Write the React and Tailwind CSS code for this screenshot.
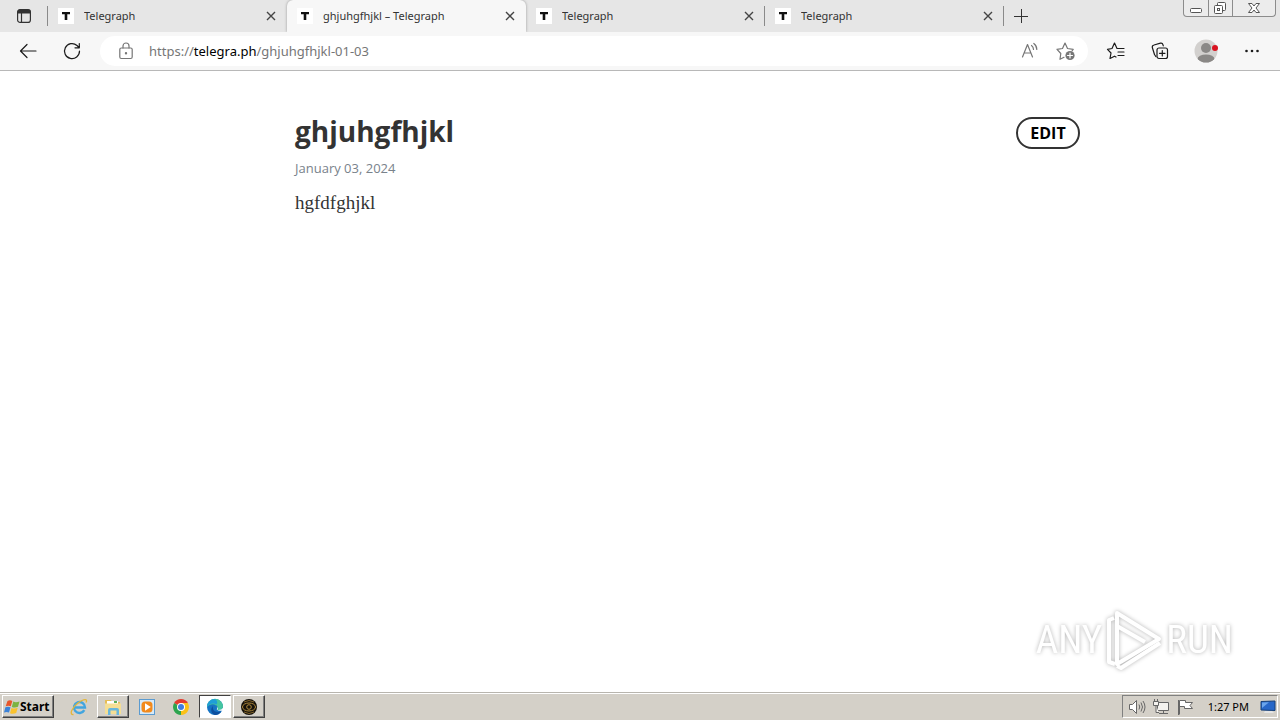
import { useState } from 'react';

const TABS = [
    { id: 1, title: 'Telegraph' },
    { id: 2, title: 'ghjuhgfhjkl – Telegraph' },
    { id: 3, title: 'Telegraph' },
    { id: 4, title: 'Telegraph' },
];

// Generic stroked icon on a 20px grid
function Icon({ children, className = 'size-5' }) {
    return (
        <svg
            viewBox="0 0 20 20"
            className={`${className} shrink-0`}
            fill="none"
            stroke="currentColor"
            strokeWidth="1.2"
            strokeLinecap="round"
            strokeLinejoin="round"
            aria-hidden="true"
        >
            {children}
        </svg>
    );
}

function WindowControls() {
    return (
        <div className="flex h-[17px] w-[93px] rounded-b-[4px] border border-t-0 border-[#8c8c8c] bg-[#ececec] text-[#555]">
            <button aria-label="Minimize" className="flex flex-1 items-center justify-center border-r border-[#8c8c8c]">
                <svg viewBox="0 0 14 14" className="size-[14px]" fill="#fff" stroke="currentColor">
                    <rect x="1.5" y="7.5" width="11" height="4" rx="1" />
                </svg>
            </button>
            <button aria-label="Restore" className="flex flex-1 items-center justify-center border-r border-[#8c8c8c]">
                <svg viewBox="0 0 14 14" className="size-[14px]" fill="#fff" stroke="currentColor">
                    <rect x="4.5" y="1.5" width="8" height="8" rx="1" />
                    <rect x="1.5" y="4.5" width="8" height="8" rx="1" />
                    <rect x="4.5" y="7.5" width="2" height="2" />
                </svg>
            </button>
            <button aria-label="Close" className="flex w-[42px] items-center justify-center">
                <svg viewBox="0 0 14 14" className="size-[14px]" fill="#fff" stroke="currentColor">
                    <path d="M1.5 2.5h3.5l2 2.5 2-2.5h3.5L9 7l3.5 4.5H9L7 9l-2 2.5H1.5L5 7z" />
                </svg>
            </button>
        </div>
    );
}

function TabStrip({ active, onSelect }) {
    return (
        <div className="flex h-8 items-stretch bg-[#e6e6e6]">
            <button aria-label="Tab actions" className="flex w-[47px] items-center justify-center text-[#333]">
                <svg viewBox="0 0 16 16" className="size-4" fill="none" stroke="currentColor" strokeWidth="1.2">
                    <rect x="1.6" y="1.6" width="12.8" height="12.8" rx="2.5" />
                    <path d="M2 4V3.5A1.5 1.5 0 0 1 3.5 2h9A1.5 1.5 0 0 1 14 3.5V5H2z" fill="currentColor" />
                    <path d="M5.5 5v9" />
                </svg>
            </button>
            <div className="my-[6px] w-px bg-[#8a8a8a]" />
            {TABS.map((tab) => {
                const isActive = tab.id === active;
                return (
                    <div
                        key={tab.id}
                        className={`flex max-w-[239px] flex-1 items-center pr-2 pl-[10px] ${isActive
                            ? 'rounded-t-md bg-[#f7f7f7] shadow-[0_0_3px_rgba(0,0,0,0.35)] [clip-path:inset(0_-4px_0_-4px)]'
                            : ''
                            }`}
                    >
                        <button onClick={() => onSelect(tab.id)} className="flex min-w-0 flex-1 items-center gap-[10px] text-left">
                            <span className="flex size-4 shrink-0 items-center justify-center bg-white">
                                <svg viewBox="0 0 16 16" className="size-4" fill="#111" aria-hidden="true">
                                    <path d="M4 4h8v2.3H9.3V12H6.7V6.3H4z" />
                                </svg>
                            </span>
                            <span className="truncate text-[11px] leading-4 text-[#333]">{tab.title}</span>
                        </button>
                        <button aria-label="Close tab" className="flex size-4 items-center justify-center text-[#444]">
                            <svg viewBox="0 0 10 10" className="size-[10px]" stroke="currentColor" strokeWidth="1.4">
                                <path d="M1 1l8 8M9 1L1 9" />
                            </svg>
                        </button>
                        {!isActive && tab.id > 2 && <span className="-mr-2 ml-[7px] h-5 w-px bg-[#8a8a8a]" />}
                    </div>
                );
            })}
            <button aria-label="New tab" className="flex w-[34px] items-center justify-center text-[#333]">
                <svg viewBox="0 0 14 14" className="size-[14px]" stroke="currentColor">
                    <path d="M7.5 0v14M0 7.5h14" />
                </svg>
            </button>
            <div className="ml-auto pr-1">
                <WindowControls />
            </div>
        </div>
    );
}

function Toolbar() {
    return (
        <div className="flex h-[39px] items-center border-b border-[#b8b8b8] bg-[#f7f7f7] text-[#1b1b1b]">
            <button aria-label="Back" className="ml-[18px]">
                <Icon>
                    <path d="M18 10H2.5M9 3.5L2.5 10 9 16.5" />
                </Icon>
            </button>
            <button aria-label="Refresh" className="ml-6">
                <Icon>
                    <path d="M17.5 10A7.5 7.5 0 1 1 15 4.5L17 6.5M17.3 2.5v4.3H13" />
                </Icon>
            </button>
            <div className="ml-[18px] flex h-[30px] flex-1 items-center rounded-full bg-white pr-3 pl-4 text-[#767676]">
                <Icon>
                    <rect x="3.8" y="7" width="12.4" height="10.5" rx="1.5" />
                    <path d="M7 7V5a3 3 0 0 1 6 0v2" />
                    <circle cx="10" cy="12.3" r=".6" fill="currentColor" />
                </Icon>
                <div className="ml-[13px] flex-1 text-[13px] leading-5">
                    https://<span className="text-black">telegra.ph</span>/ghjuhgfhjkl-01-03
                </div>
                <button aria-label="Read aloud">
                    <Icon>
                        <path d="M2.5 16L7.5 3.5 12.5 16M4.2 12h6.6" />
                        <path d="M11.5 4.5q2 1.5 2 4M13.8 2.5q3 2.2 3 6" />
                    </Icon>
                </button>
                <button aria-label="Add to favorites" className="ml-4">
                    <Icon>
                        <path d="M8 16.3l-4 2 .8-5.8L1 8.3l5.5-.8L9 2 11.500 7.500l5.700.8-1.200 1.700" />
                        <circle cx="14" cy="14.500" r="4.600" fill="currentColor" stroke="none" />
                        <path d="M14 12v5M11.500 14.500h5" stroke="#fff" />
                    </Icon>
                </button>
            </div>
            <button aria-label="Favorites" className="ml-[18px]">
                <Icon>
                    <path d="M11 7.500L8.500 2 6 7.500l-4.500.8L5 12l-1 5.500 4.500-2.300 1.500.8M11 7.500h7M12 11h6M12 14.500h6" />
                </Icon>
            </button>
            <button aria-label="Collections" className="ml-6">
                <Icon>
                    <path d="M4.500 13.500L2.300 6.500Q2 4.500 4 4l6.500-1.800q2-.4 2.500 1.600l.3 1M5.800 15.500l-1.300-2" />
                    <rect x="7" y="7" width="10.500" height="10.500" rx="2" />
                    <path d="M12.300 9.500v5.500M9.500 12.300H15" />
                </Icon>
            </button>
            <button aria-label="Profile" className="ml-6">
                <svg viewBox="0 0 24 24" className="size-6">
                    <clipPath id="avatar">
                        <circle cx="12" cy="12" r="11.500" />
                    </clipPath>
                    <g clipPath="url(#avatar)">
                        <path d="M0 0h24v24H0z" fill="#d2d0ce" />
                        <circle cx="12" cy="9" r="5" fill="#8a8886" />
                        <ellipse cx="12" cy="20" rx="8.500" ry="4.500" fill="#8a8886" />
                    </g>
                    <circle cx="21" cy="9" r="3" fill="#d91320" />
                </svg>
            </button>
            <button aria-label="Settings and more" className="mr-[18px] ml-6">
                <Icon>
                    <g fill="currentColor" stroke="none">
                        <circle cx="4.500" cy="10" r="1.300" />
                        <circle cx="10" cy="10" r="1.300" />
                        <circle cx="15.500" cy="10" r="1.300" />
                    </g>
                </Icon>
            </button>
        </div>
    );
}

function Watermark() {
    return (
        <div className="absolute right-[47px] bottom-5 flex items-center gap-[2px] font-['Roboto_Condensed','Liberation_Sans_Narrow','Roboto',sans-serif] text-[39px] leading-[64px] text-white drop-shadow-[0_0_2px_rgba(0,0,0,0.3)]">
            <span>ANY</span>
            <svg viewBox="0 0 60 64" className="h-16 w-[60px]" fill="none" stroke="currentColor" strokeWidth="4" strokeLinejoin="round" aria-hidden="true">
                <path d="M13 47V5l42 26-42 25V18l28 16" />
                <path d="M10 10L5 12v42l6 2M56 35L17 60l-4-2" />
            </svg>
            <span>RUN</span>
        </div>
    );
}

// Raised button of the classic taskbar
function TaskButton({ label, raised, pressed, children }) {
    let look = 'border-transparent';
    if (raised) look = 'border-t-white border-l-white border-r-[#404040] border-b-[#404040] shadow-[inset_-1px_-1px_0_#808080]';
    if (pressed) look = 'border-t-[#404040] border-l-[#404040] border-r-white border-b-white bg-white';
    return (
        <button aria-label={label} className={`flex h-[23px] w-8 items-center justify-center border ${look}`}>
            {children}
        </button>
    );
}

function Taskbar() {
    return (
        <footer className="flex h-7 items-center border-t border-[#b8b5ae] bg-[#d4d0c8] pr-[2px] pl-[2px] shadow-[inset_0_1px_0_#fff]">
            <button className="flex h-[23px] w-[52px] items-center border border-t-white border-r-[#404040] border-b-[#404040] border-l-white pl-px text-[12px] font-bold text-black shadow-[inset_-1px_-1px_0_#808080]">
                <svg viewBox="0 0 16 16" className="size-4 shrink-0" aria-hidden="true">
                    <path d="M3.500 2Q6 .5 8.300 2L6.800 7.300Q4.500 6 1.700 7.300z" fill="#e8562a" />
                    <path d="M9.300 2.600Q11.800 4 15.500 2.500L14 7.800Q10.800 9.200 7.800 7.900z" fill="#7cb342" />
                    <path d="M1.400 8.300Q4 7 6.500 8.300L5 13.500Q2.500 12.300 0 13.500z" fill="#3b82d8" />
                    <path d="M7.500 8.900Q10.500 10.200 13.700 8.800L12.200 14Q9 15.500 6 14.200z" fill="#f9c22e" />
                </svg>
                Start
            </button>
            <div className="ml-[9px] flex gap-[2px]">
                <TaskButton label="Internet Explorer">
                    <svg viewBox="0 0 18 18" className="size-[18px]" fill="none">
                        <path d="M14.300 12.200A5.500 5.500 0 1 1 15 9.500H5" stroke="#42a5df" strokeWidth="2.400" />
                        <path d="M3.500 16.500C-1 17 1.500 10 8 5s10-4 8-.5" stroke="#e3b63a" strokeWidth="1.300" />
                    </svg>
                </TaskButton>
                <TaskButton label="File Explorer" raised>
                    <svg viewBox="0 0 18 18" className="size-[18px]">
                        <path d="M1 2h6l1 2h8v12H1z" fill="#e5bd58" />
                        <path d="M3 3h11v4H3z" fill="#fff" />
                        <path d="M1 5.500h16V16H1z" fill="#f5de94" />
                        <path d="M4 17v-5q0-2 2-2h7q2 0 2 2v5h-2.500v-4.500h-6V17z" fill="#68b6dc" />
                        <path d="M10 3h3v2h-3z" fill="#5cae59" />
                    </svg>
                </TaskButton>
                <TaskButton label="Media Player">
                    <svg viewBox="0 0 18 18" className="size-[18px]">
                        <rect x="1.500" y="1.500" width="15" height="15" fill="#d7eaf8" stroke="#5b9bd0" />
                        <rect x="3.500" y="3.500" width="11" height="11" rx="3.500" fill="#f28a1c" />
                        <path d="M7 5.200L12.800 9 7 12.800z" fill="#fff" />
                    </svg>
                </TaskButton>
                <TaskButton label="Chrome">
                    <svg viewBox="0 0 18 18" className="size-[18px]">
                        <path d="M9 9L2.100 5A8 8 0 0 1 15.900 5z" fill="#e33b2e" />
                        <path d="M9 9L2.100 5A8 8 0 0 0 9 17z" fill="#2da44e" />
                        <path d="M9 9v8A8 8 0 0 0 15.900 5H9z" fill="#fbc116" />
                        <circle cx="9" cy="9" r="4" fill="#fff" />
                        <circle cx="9" cy="9" r="3" fill="#3f7de0" />
                    </svg>
                </TaskButton>
                <TaskButton label="Edge" pressed>
                    <svg viewBox="0 0 18 18" className="size-[18px]">
                        <circle cx="9" cy="9" r="8" fill="#1674c4" />
                        <path d="M1 9A8 8 0 0 1 17 8.500c0 3-2.500 4-5.500 3.500C10 11.500 12 11 11.500 9 10.500 5.500 4 5 1 9z" fill="#45c5a0" />
                        <path d="M1 9A8 8 0 0 1 9 1c2 1 3 4 1.500 5.500C7 4.500 3 6 1 9z" fill="#1f9ed8" />
                        <path d="M7 8c-1 4 2 7 8 5.500C13 17 10 17 9 17c-4-1-5-6-2-9z" fill="#0d4f9e" />
                        <path d="M8.500 7.500Q12 8 10.800 11.500 12 13.300 18 12.500L17.500 9.500Q15 12.500 11.500 12 12.800 9 8.500 7.500z" fill="#fff" />
                    </svg>
                </TaskButton>
                <TaskButton label="Capture tool" raised>
                    <svg viewBox="0 0 18 18" className="size-[18px]" fill="none">
                        <circle cx="9" cy="9" r="8" fill="#15110a" />
                        <ellipse cx="9" cy="9" rx="6.500" ry="4" stroke="#b08a3c" />
                        <circle cx="9" cy="9" r="2.300" stroke="#b08a3c" />
                        <path d="M4 4q5-3 10 0M4 14q5 3 10 0" stroke="#80632b" />
                    </svg>
                </TaskButton>
            </div>
            <div className="ml-auto flex h-[23px] items-center border border-t-[#808080] border-r-white border-b-white border-l-[#808080] pr-px pl-[5px] text-[#666]">
                <svg viewBox="0 0 18 18" className="size-[18px]" fill="#fff" stroke="currentColor" aria-label="Volume">
                    <path d="M1.500 6.500h3l4-4v13l-4-4h-3z" />
                    <path d="M11 6.500q1.500 2.500 0 5M13 4.500q3 4.500 0 9M15 3q4 6 0 12" fill="none" />
                </svg>
                <svg viewBox="0 0 18 18" className="ml-[6px] size-[18px]" fill="#f4f2ee" stroke="currentColor" aria-label="Network">
                    <path d="M5.500 4.500h11v8h-11zM7 15.500h9M11.500 12.500v3" />
                    <path d="M1.500 3.500h5v4h-5zM2.500 1v2.500M5.500 1v2.500M4 7.500v7h3" />
                </svg>
                <svg viewBox="0 0 18 18" className="ml-[6px] size-[18px]" fill="#fff" stroke="currentColor" aria-label="Action center">
                    <path d="M3.500 16.500v-14h6v2h7l-2.500 3 2.500 3h-8v-2h-5" />
                    <path d="M2.500 2v15" />
                </svg>
                <time className="ml-[14px] text-[11px] leading-4 whitespace-nowrap text-black">1:27 PM</time>
                <button aria-label="Show desktop" className="ml-[11px]">
                    <svg viewBox="0 0 16 16" className="size-4">
                        <path d="M1 2.500l14-.5v9.500L1 11z" fill="#2767c8" stroke="#174078" />
                        <path d="M2 3.500l7-.3L2 9z" fill="#6aa5ec" />
                        <path d="M5 12h7l2 2H4z" fill="#e5e5e5" />
                    </svg>
                </button>
            </div>
        </footer>
    );
}

function App() {
    const [activeTab, setActiveTab] = useState(2);

    return (
        <div className="flex min-h-screen flex-col bg-white font-['Noto_Sans','Open_Sans',sans-serif]">
            <header>
                <TabStrip active={activeTab} onSelect={setActiveTab} />
                <Toolbar />
            </header>
            <main className="relative grid flex-1 grid-cols-[1fr_minmax(0,732px)_1fr] content-start">
                <article className="col-start-2 px-[21px] pt-10 text-[#333]">
                    <h1 className="font-['Open_Sans',sans-serif] text-[28px] leading-10 font-bold">ghjuhgfhjkl</h1>
                    <time className="mt-[7px] block font-['Open_Sans',sans-serif] text-[13px] leading-5 text-[#79828b]">
                        January 03, 2024
                    </time>
                    <p className="mt-[11px] font-['Liberation_Serif',serif] text-[19px] leading-7">hgfdfghjkl</p>
                </article>
                <aside className="pt-[46px] pl-[10px]">
                    <button className="flex h-8 w-16 items-center justify-center rounded-full border-2 border-[#333] font-['Open_Sans',sans-serif] text-[16px] font-bold text-black">
                        EDIT
                    </button>
                </aside>
                <Watermark />
            </main>
            <Taskbar />
        </div>
    );
}

export default App;
